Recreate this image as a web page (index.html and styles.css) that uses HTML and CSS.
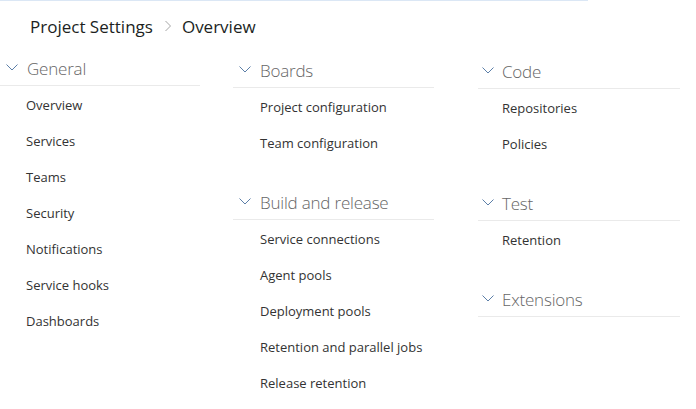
FILE: index.html
```html
<!DOCTYPE html>
<html>
<head>
<meta charset="utf-8">
<link rel="stylesheet" href="styles.css">
</head>
<body>
<div class="topline"></div>
<div class="breadcrumb">
  <span class="crumb">Project Settings</span>
  <svg class="sep" width="8" height="12" viewBox="0 0 8 12"><path d="M1.5 1 L6.5 6 L1.5 11" fill="none" stroke="#a6a6a6" stroke-width="1"/></svg>
  <span class="crumb">Overview</span>
</div>
<div class="columns">
  <div class="col col1">
    <div class="section">
      <div class="sec-head"><svg class="chev" width="12" height="7" viewBox="0 0 12 7"><path d="M0.5 0.5 L6 6 L11.5 0.5" fill="none" stroke="#5c7fa8" stroke-width="1"/></svg><span>General</span></div>
      <ul class="items">
        <li>Overview</li>
        <li>Services</li>
        <li>Teams</li>
        <li>Security</li>
        <li>Notifications</li>
        <li>Service hooks</li>
        <li>Dashboards</li>
      </ul>
    </div>
  </div>
  <div class="col col2">
    <div class="section">
      <div class="sec-head"><svg class="chev" width="12" height="7" viewBox="0 0 12 7"><path d="M0.5 0.5 L6 6 L11.5 0.5" fill="none" stroke="#5c7fa8" stroke-width="1"/></svg><span>Boards</span></div>
      <ul class="items">
        <li>Project configuration</li>
        <li>Team configuration</li>
      </ul>
    </div>
    <div class="section">
      <div class="sec-head"><svg class="chev" width="12" height="7" viewBox="0 0 12 7"><path d="M0.5 0.5 L6 6 L11.5 0.5" fill="none" stroke="#5c7fa8" stroke-width="1"/></svg><span>Build and release</span></div>
      <ul class="items">
        <li>Service connections</li>
        <li>Agent pools</li>
        <li>Deployment pools</li>
        <li>Retention and parallel jobs</li>
        <li>Release retention</li>
      </ul>
    </div>
  </div>
  <div class="col col3">
    <div class="section">
      <div class="sec-head"><svg class="chev" width="12" height="7" viewBox="0 0 12 7"><path d="M0.5 0.5 L6 6 L11.5 0.5" fill="none" stroke="#5c7fa8" stroke-width="1"/></svg><span>Code</span></div>
      <ul class="items">
        <li>Repositories</li>
        <li>Policies</li>
      </ul>
    </div>
    <div class="section">
      <div class="sec-head"><svg class="chev" width="12" height="7" viewBox="0 0 12 7"><path d="M0.5 0.5 L6 6 L11.5 0.5" fill="none" stroke="#5c7fa8" stroke-width="1"/></svg><span>Test</span></div>
      <ul class="items">
        <li>Retention</li>
      </ul>
    </div>
    <div class="section">
      <div class="sec-head"><svg class="chev" width="12" height="7" viewBox="0 0 12 7"><path d="M0.5 0.5 L6 6 L11.5 0.5" fill="none" stroke="#5c7fa8" stroke-width="1"/></svg><span>Extensions</span></div>
    </div>
  </div>
</div>
</body>
</html>
```
FILE: styles.css
```css
html, body {
  margin: 0;
  padding: 0;
  background: #ffffff;
}
body {
  font-family: "Open Sans", "Noto Sans", sans-serif;
  color: #333333;
  width: 696px;
  height: 409px;
  overflow: hidden;
}
.topline {
  width: 588px;
  height: 1px;
  background: #dbe7f5;
}
.breadcrumb {
  display: flex;
  align-items: center;
  height: 24px;
  margin-top: 13px;
  padding-left: 30px;
  font-size: 17px;
  color: #201f1e;
}
.breadcrumb .sep {
  margin: 0 10px 0 11px;
}
.columns {
  display: grid;
  grid-template-columns: 200px 201px 213px;
  column-gap: 33px;
  align-items: start;
}
.col1 { margin-top: 15px; }
.col2 { margin-top: 17px; }
.col3 { margin-top: 18px; margin-left: 11px; }
.section + .section { margin-top: 26px; }
.sec-head {
  display: flex;
  align-items: center;
  height: 30px;
  padding-bottom: 2px;
  border-bottom: 1px solid #eaeaea;
  padding-left: 6px;
  font-size: 17px;
  letter-spacing: -0.2px;
  font-weight: 300;
  color: #666666;
}
.sec-head .chev {
  margin-right: 9px;
  margin-top: -1px;
}
.col3 .sec-head { padding-left: 4px; }
.col3 .sec-head .chev { margin-right: 8px; }
.items {
  list-style: none;
  margin: 0;
  padding: 1px 0 0 0;
}
.items li {
  height: 36px;
  line-height: 36px;
  padding-left: 26px;
  font-size: 13px;
  color: #333333;
  white-space: nowrap;
}
.col2 .items li { padding-left: 27px; }
.col3 .items li { padding-left: 24px; }
```
